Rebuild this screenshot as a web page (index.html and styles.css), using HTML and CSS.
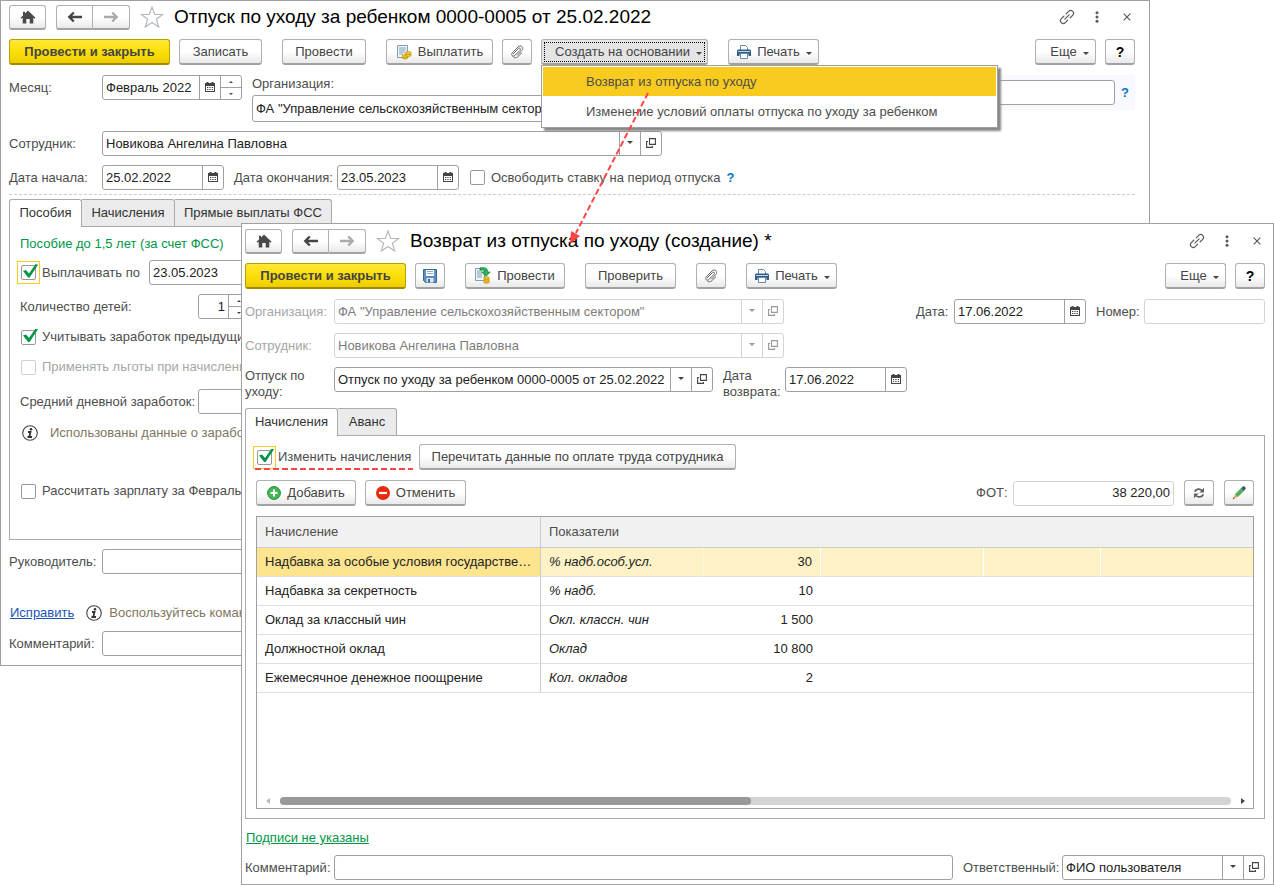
FILE: index.html
```html
<!DOCTYPE html>
<html lang="ru">
<head>
<meta charset="utf-8">
<title>Возврат из отпуска по уходу</title>
<link rel="stylesheet" href="styles.css">
</head>
<body>
<svg class="sprite" aria-hidden="true">
  <symbol id="home" viewBox="0 0 16 14"><path fill="#4a4a4a" d="M8 .6 15.500 7.800 14.500 8.800 13.300 7.800V13.500H9.700V9H6.300v4.500H2.700V7.800L1.500 8.800.5 7.800 3 5.400V1.800h2v1.700z"/></symbol>
  <symbol id="back" viewBox="0 0 16 12"><path fill="none" stroke="currentColor" stroke-width="2.400" d="M2 6h13M6.800 1.500 2.300 6l4.500 4.500"/></symbol>
  <symbol id="fwd" viewBox="0 0 16 12"><path fill="none" stroke="currentColor" stroke-width="2.400" d="M14 6H1M9.200 1.500 13.700 6l-4.500 4.500"/></symbol>
  <symbol id="star" viewBox="0 0 24 22"><path fill="#fff" stroke="#b4b9c0" stroke-width="1.200" d="m12 1 2.700 7.500h8l-6.300 4.800 2.300 7.700L12 16.500 5.300 21l2.300-7.700L1.300 8.500h8z"/></symbol>
  <symbol id="link" viewBox="0 0 16 16"><path transform="rotate(-45 8 8)" fill="none" stroke="#5a5a5a" stroke-width="1.200" stroke-linecap="round" d="M6.300 5.200H2.800a2.800 2.800 0 0 0 0 5.600h3.500M9.700 5.200h3.500a2.800 2.800 0 0 1 0 5.600H9.700M5 8h6"/></symbol>
  <symbol id="dots" viewBox="0 0 4 12"><circle cx="2" cy="1.700" r="1.500" fill="#5a5a5a"/><circle cx="2" cy="6" r="1.500" fill="#5a5a5a"/><circle cx="2" cy="10.300" r="1.500" fill="#5a5a5a"/></symbol>
  <symbol id="close" viewBox="0 0 8 8"><path stroke="#555" stroke-width="1.100" d="m.7.7 6.600 6.600m0-6.600L.7 7.300"/></symbol>
  <symbol id="caret" viewBox="0 0 6 3"><path fill="currentColor" d="M0 0h6L3 3z"/></symbol>
  <symbol id="caret-up" viewBox="0 0 4 2"><path fill="currentColor" d="M0 2h4L2 0z"/></symbol>
  <symbol id="open" viewBox="0 0 10 10"><path fill="none" stroke="currentColor" stroke-width="1.100" d="M3.500.6h5.900v5.800H3.500zM2 3.500H.6v5.900h5.800V8"/></symbol>
  <symbol id="cal" viewBox="0 0 10 10"><path fill="currentColor" fill-rule="evenodd" d="M0 1h1.500V0h2v1h3V0h2v1H10v9H0zM1 4v5h8V4z"/><path fill="currentColor" d="M2 5h1.300v1H2zm2.300 0h1.300v1H4.300zm2.400 0H8v1H6.700zM2 7h1.300v1H2zm2.300 0h1.300v1H4.300zm2.400 0H8v1H6.700z"/></symbol>
  <symbol id="clip" viewBox="0 0 14 14"><path fill="none" stroke="#666" stroke-linecap="round" d="m3.300 8.700 5-5c1.500-1.400 3 .2 1.700 1.600l-4.900 5c-2.300 2.100-4.700-.3-2.600-2.600L8 2c3-2.800 6.500.6 3.700 3.600L7.500 10"/><path fill="none" stroke="#666" d="m3 11.500c1.500 2 3.500 1.500 5 0L12 7.600"/></symbol>
  <symbol id="printer" viewBox="0 0 14 14"><path fill="#fff" stroke="#6b88a5" d="M3.500 5V.5h5l2 2V5"/><path fill="#2f5f8c" d="M0 5.500 1 4.500h12l1 1V11h-2.500V9h-9v2H0z"/><path fill="#fff" stroke="#6b88a5" d="M3.500 8.500h7v5h-7z"/><path fill="#bcd3e6" d="M1 6h12v1H1z"/></symbol>
  <symbol id="pay" viewBox="0 0 16 16"><path fill="#f2f7fb" stroke="#7f9db9" d="M1.500 1.500h10v12h-10z"/><path stroke="#7f9db9" d="M3 4h7M3 6h7M3 8h6M3 10h4"/><g fill="#f3c431" stroke="#b8860b" stroke-width=".6"><ellipse cx="9" cy="13.500" rx="3" ry="1.500"/><ellipse cx="9" cy="12" rx="3" ry="1.500"/><ellipse cx="12.300" cy="11" rx="3" ry="1.500"/><ellipse cx="12.300" cy="9" rx="3" ry="1.500"/></g></symbol>
  <symbol id="post" viewBox="0 0 16 17"><path fill="#f2f7fb" stroke="#7f9db9" d="M.5 1.500h9v12h-9z"/><path stroke="#7f9db9" d="M2 4h5M2 6h5M2 8h5M2 10h5"/><path fill="#27b558" stroke="#12803a" stroke-width=".7" d="M5 .7h3.500c3 0 4.200 1.500 4.200 4.300h2.600L11 9.300 6.700 5h2.600c0-1.700-.8-2-2.300-2H5z"/><g fill="#f3c431" stroke="#b8860b" stroke-width=".6"><ellipse cx="11.500" cy="15" rx="3" ry="1.300"/><ellipse cx="11.500" cy="13" rx="3" ry="1.300"/><ellipse cx="11.500" cy="11" rx="3" ry="1.300"/></g></symbol>
  <symbol id="save" viewBox="0 0 14 14"><path fill="#5d8fc4" stroke="#3b6797" d="M.5.5h13v13h-11l-2-2z"/><path fill="#fff" d="M3 1h8v6H3z"/><path stroke="#8fa9c4" d="M4 2.500h6M4 4.500h6"/><path fill="#dfe7ef" d="M3.500 9h7v4.500h-7z"/><path fill="#3b6797" d="M5 10h2v3.500H5z"/></symbol>
  <symbol id="add" viewBox="0 0 14 14"><circle cx="7" cy="7" r="6.400" fill="#43b852" stroke="#1f8a3a"/><path stroke="#fff" stroke-width="2" d="M7 3.500v7M3.500 7h7"/></symbol>
  <symbol id="stop" viewBox="0 0 14 14"><circle cx="7" cy="7" r="7" fill="#ea2a0c"/><path stroke="#fff" stroke-width="2.200" d="M3 7h8"/></symbol>
  <symbol id="refresh" viewBox="0 0 12 12"><path fill="none" stroke="#606060" stroke-width="1.800" d="M1.700 4.700C3 1.500 7 1.300 9 3.500M10.300 7.300C9 10.500 5 10.700 3 8.500"/><path fill="#606060" d="M11 .8v4.700H6.300zM1 11.200V6.500h4.700z"/></symbol>
  <symbol id="pencil" viewBox="0 0 14 14"><path fill="#4bb557" stroke="#2c7f3b" stroke-width=".5" d="m3.300 8.200 6.500-6.500 2.500 2.500-6.500 6.500z"/><path fill="#44546a" d="m9.300 2.200 1.700-1.700c.6-.5 1-.5 1.500 0l1 1c.5.5.5 1 0 1.500l-1.700 1.700z"/><path fill="#e9a84c" d="m3.300 8.200 2.500 2.500L.7 13.300z"/><path fill="#333" d="m1.600 11.500-.9 1.800 1.800-.9z"/></symbol>
  <symbol id="info" viewBox="0 0 16 16"><circle cx="8" cy="8" r="7.300" fill="#fff" stroke="#444" stroke-width="1.100"/><circle cx="9" cy="4.200" r="1.300" fill="#333"/><path fill="none" stroke="#333" stroke-width="1.800" d="M6 7h2.500l-1.200 5H10M5.500 12H8"/></symbol>
</svg>

<main class="desktop">
  <section class="window window-back">
    <header class="titlebar">
      <button class="btn home" aria-label="Начало"><svg width="16" height="14"><use href="#home"/></svg></button>
      <div class="nav"><button class="btn" aria-label="Назад"><svg width="16" height="12"><use href="#back"/></svg></button><button class="btn dim" aria-label="Вперед"><svg width="16" height="12"><use href="#fwd"/></svg></button></div>
      <svg class="star" width="24" height="22"><use href="#star"/></svg>
      <h1>Отпуск по уходу за ребенком 0000-0005 от 25.02.2022</h1>
      <div class="wintools"><button aria-label="Ссылка"><svg width="16" height="16"><use href="#link"/></svg></button><button aria-label="Меню"><svg width="4" height="12"><use href="#dots"/></svg></button><button aria-label="Закрыть"><svg width="8" height="8"><use href="#close"/></svg></button></div>
    </header>
    <div class="toolbar">
      <div class="group"><button class="btn primary">Провести и закрыть</button><button class="btn w83">Записать</button></div>
      <button class="btn w84">Провести</button>
      <div class="group">
        <button class="btn w107"><svg width="16" height="16"><use href="#pay"/></svg>Выплатить</button>
        <button class="btn square" aria-label="Файлы"><svg width="14" height="14"><use href="#clip"/></svg></button>
        <div class="menu-host">
          <button class="btn pressed" aria-expanded="true">Создать на основании<svg class="caret" width="6" height="3"><use href="#caret"/></svg></button>
          <div class="menu"><button class="current">Возврат из отпуска по уходу</button><button>Изменение условий оплаты отпуска по уходу за ребенком</button></div>
        </div>
      </div>
      <button class="btn w91"><svg width="14" height="14"><use href="#printer"/></svg>Печать<svg class="caret" width="6" height="3"><use href="#caret"/></svg></button>
      <div class="group push"><button class="btn more">Еще<svg class="caret" width="6" height="3"><use href="#caret"/></svg></button><button class="btn square help">?</button></div>
    </div>

    <div class="row top">
      <label class="lab93" for="month">Месяц:</label>
      <div class="field w140"><input id="month" value="Февраль 2022"><button aria-label="Календарь"><svg width="10" height="10"><use href="#cal"/></svg></button><span class="spin"><button aria-label="Больше"><svg width="4" height="2"><use href="#caret-up"/></svg></button><button aria-label="Меньше"><svg width="4" height="2"><use href="#caret"/></svg></button></span></div>
      <div class="org"><label for="org1">Организация:</label><div class="field tall"><input id="org1" value='ФА "Управление сельскохозяйственным сектором"'></div></div>
      <div class="number-box"><div class="field"><input aria-label="Номер"></div><a class="q" href="#">?</a></div>
    </div>
    <div class="row">
      <label class="lab93" for="emp1">Сотрудник:</label>
      <div class="field w560"><input id="emp1" value="Новикова Ангелина Павловна"><button aria-label="Выбрать"><svg width="6" height="3"><use href="#caret"/></svg></button><button aria-label="Открыть"><svg width="10" height="10"><use href="#open"/></svg></button></div>
    </div>
    <div class="row dates">
      <label class="lab93" for="start">Дата начала:</label>
      <div class="field w122"><input id="start" value="25.02.2022"><button aria-label="Календарь"><svg width="10" height="10"><use href="#cal"/></svg></button></div>
      <label class="lab103" for="end">Дата окончания:</label>
      <div class="field w122"><input id="end" value="23.05.2023"><button aria-label="Календарь"><svg width="10" height="10"><use href="#cal"/></svg></button></div>
      <label class="check after-field"><input type="checkbox">Освободить ставку на период отпуска</label>
      <a class="q" href="#">?</a>
    </div>
    <div class="tabs"><button class="active w73">Пособия</button><button class="w93">Начисления</button><button class="w157">Прямые выплаты ФСС</button></div>
    <div class="panel benefits">
      <p class="green">Пособие до 1,5 лет (за счет ФСС)</p>
      <div class="row"><label class="check lab129"><span class="focus"><input type="checkbox" checked></span>Выплачивать по</label><div class="field w122"><input aria-label="Выплачивать по" value="23.05.2023"></div></div>
      <div class="row"><label class="lab178" for="kids">Количество детей:</label><div class="field w52"><input id="kids" class="num" value="1"><span class="spin"><button aria-label="Больше"><svg width="4" height="2"><use href="#caret-up"/></svg></button><button aria-label="Меньше"><svg width="4" height="2"><use href="#caret"/></svg></button></span></div></div>
      <label class="check line"><input type="checkbox" checked>Учитывать заработок предыдущих</label>
      <label class="check line off"><input type="checkbox" disabled>Применять льготы при начислении</label>
      <div class="row avg"><label class="lab178" for="avg">Средний дневной заработок:</label><div class="field w122"><input id="avg"></div></div>
      <p class="note"><svg width="16" height="16"><use href="#info"/></svg>Использованы данные о заработке</p>
      <label class="check calc"><input type="checkbox">Рассчитать зарплату за Февраль</label>
    </div>
    <div class="row boss"><label class="lab93" for="boss">Руководитель:</label><div class="field w560"><input id="boss"></div></div>
    <p class="fix"><a href="#">Исправить</a><svg width="16" height="16"><use href="#info"/></svg><span>Воспользуйтесь командой</span></p>
    <div class="row"><label class="lab93" for="com1">Комментарий:</label><div class="field w560"><input id="com1"></div></div>
  </section>

  <section class="window window-front">
    <header class="titlebar">
      <button class="btn home" aria-label="Начало"><svg width="16" height="14"><use href="#home"/></svg></button>
      <div class="nav"><button class="btn" aria-label="Назад"><svg width="16" height="12"><use href="#back"/></svg></button><button class="btn dim" aria-label="Вперед"><svg width="16" height="12"><use href="#fwd"/></svg></button></div>
      <svg class="star" width="24" height="22"><use href="#star"/></svg>
      <h1>Возврат из отпуска по уходу (создание) *</h1>
      <div class="wintools"><button aria-label="Ссылка"><svg width="16" height="16"><use href="#link"/></svg></button><button aria-label="Меню"><svg width="4" height="12"><use href="#dots"/></svg></button><button aria-label="Закрыть"><svg width="8" height="8"><use href="#close"/></svg></button></div>
    </header>
    <div class="toolbar">
      <div class="group"><button class="btn primary">Провести и закрыть</button><button class="btn square" aria-label="Записать"><svg width="14" height="14"><use href="#save"/></svg></button></div>
      <button class="btn w100"><svg width="16" height="17"><use href="#post"/></svg>Провести</button>
      <button class="btn w91">Проверить</button>
      <button class="btn square" aria-label="Файлы"><svg width="14" height="14"><use href="#clip"/></svg></button>
      <button class="btn w91"><svg width="14" height="14"><use href="#printer"/></svg>Печать<svg class="caret" width="6" height="3"><use href="#caret"/></svg></button>
      <div class="group push"><button class="btn more">Еще<svg class="caret" width="6" height="3"><use href="#caret"/></svg></button><button class="btn square help">?</button></div>
    </div>
    <div class="row">
      <label class="lab89 off" for="org2">Организация:</label>
      <div class="field off w450"><input id="org2" disabled value='ФА "Управление сельскохозяйственным сектором"'><button disabled aria-label="Выбрать"><svg width="6" height="3"><use href="#caret"/></svg></button><button disabled aria-label="Открыть"><svg width="10" height="10"><use href="#open"/></svg></button></div>
      <label class="lab38 push" for="date">Дата:</label>
      <div class="field w132"><input id="date" value="17.06.2022"><button aria-label="Календарь"><svg width="10" height="10"><use href="#cal"/></svg></button></div>
      <label class="lab48" for="num">Номер:</label>
      <div class="field off w121"><input id="num" disabled></div>
    </div>
    <div class="row">
      <label class="lab89 off" for="emp2">Сотрудник:</label>
      <div class="field off w450"><input id="emp2" disabled value="Новикова Ангелина Павловна"><button disabled aria-label="Выбрать"><svg width="6" height="3"><use href="#caret"/></svg></button><button disabled aria-label="Открыть"><svg width="10" height="10"><use href="#open"/></svg></button></div>
    </div>
    <div class="row top">
      <label class="lab89 two" for="leave">Отпуск по уходу:</label>
      <div class="field w379"><input id="leave" value="Отпуск по уходу за ребенком 0000-0005 от 25.02.2022"><button aria-label="Выбрать"><svg width="6" height="3"><use href="#caret"/></svg></button><button aria-label="Открыть"><svg width="10" height="10"><use href="#open"/></svg></button></div>
      <label class="lab62 two" for="ret">Дата возврата:</label>
      <div class="field w122"><input id="ret" value="17.06.2022"><button aria-label="Календарь"><svg width="10" height="10"><use href="#cal"/></svg></button></div>
    </div>
    <div class="tabs"><button class="active w93">Начисления</button><button class="w60">Аванс</button></div>
    <div class="panel accruals">
      <div class="row change"><label class="check marked"><span class="focus"><input type="checkbox" checked></span>Изменить начисления</label><button class="btn">Перечитать данные по оплате труда сотрудника</button></div>
      <div class="row actions">
        <button class="btn w100"><svg width="14" height="14"><use href="#add"/></svg>Добавить</button><button class="btn w101"><svg width="14" height="14"><use href="#stop"/></svg>Отменить</button>
        <label class="lab38 push" for="fot">ФОТ:</label><div class="field off fot"><input id="fot" class="num" readonly value="38 220,00"></div>
        <button class="btn square" aria-label="Обновить"><svg width="12" height="12"><use href="#refresh"/></svg></button><button class="btn square pen" aria-label="Изменить"><svg width="14" height="14"><use href="#pencil"/></svg></button>
      </div>
      <div class="grid-box">
        <table>
          <colgroup><col class="c1"><col class="c2"><col class="c3"><col class="c2"><col class="c3"><col></colgroup>
          <thead><tr><th>Начисление</th><th colspan="5">Показатели</th></tr></thead>
          <tbody>
            <tr class="selected"><td>Надбавка за особые условия государстве…</td><td>% надб.особ.усл.</td><td>30</td><td></td><td></td><td></td></tr>
            <tr><td>Надбавка за секретность</td><td>% надб.</td><td>10</td><td></td><td></td><td></td></tr>
            <tr><td>Оклад за классный чин</td><td>Окл. классн. чин</td><td>1 500</td><td></td><td></td><td></td></tr>
            <tr><td>Должностной оклад</td><td>Оклад</td><td>10 800</td><td></td><td></td><td></td></tr>
            <tr><td>Ежемесячное денежное поощрение</td><td>Кол. окладов</td><td>2</td><td></td><td></td><td></td></tr>
          </tbody>
        </table>
        <div class="scroll"><svg width="4" height="6"><path fill="#bbb" d="M4 0v6L0 3z"/></svg><div class="track"><div class="thumb"></div></div><svg width="4" height="6"><path fill="#444" d="M0 0v6l4-3z"/></svg></div>
      </div>
    </div>
    <a class="sign" href="#">Подписи не указаны</a>
    <div class="row">
      <label class="lab89" for="com2">Комментарий:</label><div class="field grow"><input id="com2"></div>
      <label class="lab99" for="resp">Ответственный:</label>
      <div class="field w203"><input id="resp" value="ФИО пользователя"><button aria-label="Выбрать"><svg width="6" height="3"><use href="#caret"/></svg></button><button aria-label="Открыть"><svg width="10" height="10"><use href="#open"/></svg></button></div>
    </div>
  </section>
  <svg class="pointer" width="90" height="160" aria-hidden="true"><path fill="none" stroke="#f44" stroke-width="2" stroke-dasharray="6 3" d="M84 3 12 143"/><path fill="#f44" d="m6 154 1-13 9 5z"/></svg>
</main>
</body>
</html>
```

FILE: styles.css
```css
* { box-sizing: border-box; }
body { margin: 0; background: #fff; color: #4d4d4d; font: 13px/16px "Liberation Sans", Arial, sans-serif; }
button, input { font: inherit; color: inherit; margin: 0; padding: 0; }
button { background: none; border: 0; }
svg { flex: none; display: block; }
p { margin: 0; }
.sprite { position: absolute; width: 0; height: 0; }
.desktop { position: relative; min-height: 100vh; overflow: hidden; }

.window { position: absolute; background: #fff; border: 1px solid #a0a0a0; }
.window-back { left: 0; top: 0; right: 124px; padding: 4px 14px 9px 8px; }
.window-front { left: 241px; top: 223px; right: 0; bottom: 0; padding: 5px 8px 4px 3px; display: flex; flex-direction: column; }

.titlebar { display: flex; align-items: center; height: 24px; margin-bottom: 10px; }
.titlebar h1 { margin: 0; font-size: 19px; line-height: 24px; font-weight: 400; color: #000; white-space: nowrap; }
.star { margin: 0 10px; }
.btn { display: flex; align-items: center; justify-content: center; gap: 6px; height: 26px; border: 1px solid #b0b0b0; border-bottom: 2px solid #a2a2a2; border-radius: 3px; background: linear-gradient(#fff 50%, #e9e9e9); color: #444; white-space: nowrap; }
.btn .caret { margin: 3px -2px 0 0; }
.home { width: 37px; height: 25px; margin-right: 10px; }
.nav { display: flex; }
.nav .btn { width: 37px; height: 25px; border-radius: 3px 0 0 3px; }
.nav .btn + .btn { border-left: 0; border-radius: 0 3px 3px 0; }
.nav .dim { color: #aaa; }
.wintools { display: flex; margin-left: auto; margin-right: -7px; }
.wintools button { width: 30px; height: 24px; display: flex; align-items: center; justify-content: center; }

.toolbar { display: flex; gap: 20px; margin-bottom: 10px; }
.group { display: flex; gap: 9px; }
.push { margin-left: auto; }
.primary { width: 161px; font-weight: 700; border-color: #b9a000; border-bottom-color: #a18b00; background: linear-gradient(#ffe838, #fbdc00 60%, #eccd00); }
.square { width: 30px; }
.more { width: 61px; padding-left: 6px; }
.help { font-size: 14px; font-weight: 700; color: #000; }
.menu-host { position: relative; }
.pressed { width: 167px; background: #e4e4e4; outline: 1px dotted #000; outline-offset: -4px; padding-left: 6px; }
.menu { position: absolute; z-index: 2; left: 0; top: 26px; width: 457px; padding: 1px; border: 1px solid #a0a0a0; background: #fff; box-shadow: 3px 3px 2px #888; }
.menu button { display: block; width: 100%; height: 29px; padding-left: 43px; text-align: left; white-space: nowrap; }
.menu button + button { margin-top: 1px; }
.menu .current { background: #facb1f; }

.row { display: flex; align-items: center; margin-bottom: 9px; }
.row.top { align-items: flex-start; }
.row.top > label { line-height: 25px; }
.row.top > .two { line-height: 16px; }
.row label { flex: none; white-space: nowrap; }
.row .two { white-space: normal; padding: 1px 24px 0 0; margin-bottom: -1px; }
.row .lab62.two { padding-right: 0; }
.field { flex: none; display: flex; height: 25px; border: 1px solid #a0a0a0; border-radius: 3px; background: #fff; color: #222; overflow: hidden; }
.field input { flex: 1; min-width: 0; border: 0; background: none; padding: 0 3px; outline: 0; }
.field > button, .spin { flex: none; width: 21px; border-left: 1px solid #a0a0a0; display: flex; align-items: center; justify-content: center; color: #444; }
.field > button { padding-bottom: 2px; }
.spin { flex-direction: column; }
.spin button { flex: 1; width: 100%; display: flex; align-items: center; justify-content: center; }
.spin button + button { border-top: 1px solid #a0a0a0; }
.num { text-align: right; }
.off { color: #a6a6a6; }
.field.off { border-color: #d4d4d4; color: #7d7d7d; }
.field.off > button { border-color: #d4d4d4; color: #999; }
.grow { flex: 1; margin-right: 10px; }

.org { margin-left: 10px; width: 410px; }
.org label { display: block; height: 20px; line-height: 18px; }
.tall { height: 27px; }
.number-box { margin-left: auto; width: 430px; height: 35px; padding: 0 6px 0 10px; background: #f8f9ff; display: flex; align-items: center; gap: 6px; }
.number-box .field { flex: 1; }
.q { color: #0b74c4; font-weight: 700; text-decoration: none; }

.check { display: flex; align-items: center; gap: 6px; white-space: nowrap; }
.check input { appearance: none; flex: none; width: 15px; height: 15px; border: 1px solid #999; border-radius: 2px; background: #fff; position: relative; }
.check input:checked::after { content: ""; position: absolute; left: 1px; top: -2px; width: 15px; height: 14px; background: #009646; clip-path: polygon(0 50%, 20% 42%, 40% 68%, 84% 0, 100% 6%, 44% 96%, 34% 96%); }
.check input:disabled { border-color: #d0d0d0; }
.focus { flex: none; display: flex; padding: 3px; margin: 0 -4px; border: 1px solid #facb1f; }
.after-field { margin: 0 6px 0 11px; }

.dates { margin-bottom: 0; padding-bottom: 4px; border-bottom: 1px dashed #ccc; }
.tabs { display: flex; margin-top: 4px; position: relative; }
.tabs button { height: 27px; border: 1px solid #aaa; border-left: 0; border-bottom: 0; background: #ebebeb; color: #333; border-radius: 0 3px 0 0; white-space: nowrap; }
.tabs button.active { height: 28px; margin-bottom: -1px; padding-bottom: 1px; background: #fff; border-left: 1px solid #aaa; border-radius: 3px 3px 0 0; }
.panel { border: 1px solid #aaa; }
.benefits { height: 314px; padding: 8px 10px; margin-bottom: 9px; }
.green { color: #009646; line-height: 18px; margin-bottom: 7px; }
.benefits .check { padding-left: 1px; }
.benefits .line { height: 30px; color: #4d4d4d; }
.benefits .line.off { color: #a6a6a6; }
.benefits .row + .line { margin-top: -6px; }
.avg { margin: 7px 0; }
.note, .fix { display: flex; align-items: center; color: #80765f; white-space: nowrap; }
.note { gap: 12px; padding-left: 2px; line-height: 24px; }
.calc { margin-top: 38px; }
.fix { height: 18px; margin: 30px 0 9px; padding-left: 1px; gap: 7px; }
.fix a { color: #1a52b8; margin-right: 5px; }
.window-back > .row:last-child { margin-bottom: 0; }

.window-front .tabs { margin-top: 0; }
.accruals { flex: 1; display: flex; flex-direction: column; padding: 8px 10px 9px; }
.change { margin-bottom: 10px; gap: 7px; }
.marked { position: relative; width: 156px; padding-left: 1px; }
.marked::after { content: ""; position: absolute; left: -1px; right: -1px; bottom: -1px; height: 2px; background: repeating-linear-gradient(90deg, #f44 0 6px, transparent 6px 9px); }
.change .btn { width: 317px; }
.actions { gap: 9px; margin-bottom: 10px; }
.actions .push { margin-right: -10px; }
.field.fot { width: 161px; margin-right: 1px; color: #222; }
.pen { margin-left: 1px; }
.grid-box { flex: 1; display: flex; flex-direction: column; border: 1px solid #a0a0a0; }
table { width: 100%; table-layout: fixed; border-collapse: separate; border-spacing: 0; color: #222; }
.c1 { width: 284px; }
.c2 { width: 163px; }
.c3 { width: 117px; }
th { height: 31px; padding: 0 8px; text-align: left; font-weight: 400; color: #4d4d4d; background: #f1f1f1; border-bottom: 1px solid #ccc; border-right: 1px solid #ccc; }
th:last-child { border-right: 0; }
td { height: 29px; padding: 0 8px; border-bottom: 1px solid #e0e0e0; white-space: nowrap; }
td:first-child { border-right: 1px solid #ccc; }
td:nth-child(2) { font-style: italic; }
td:nth-child(3) { text-align: right; }
.selected td { background: #fdf2c6; border-right: 1px solid #fff; }
.selected td:first-child { background: #fde48e; border-right-color: #ccc; }
.selected td:nth-child(2), .selected td:last-child { border-right-color: #fdf2c6; }
.selected td:nth-child(2) { border-right-color: #fff6d8; }
.scroll { margin-top: auto; display: flex; align-items: center; gap: 10px; padding: 0 8px 3px 9px; }
.track { flex: 1; height: 8px; border-radius: 4px; background: #d4d4d4; }
.thumb { width: 49.500%; height: 8px; border-radius: 4px; background: #999; }
.sign { align-self: flex-start; margin: 11px 0 9px 1px; line-height: 16px; color: #009646; }
.window-front > .row:last-child { margin-bottom: 0; }
.pointer { position: absolute; z-index: 5; left: 564px; top: 90px; pointer-events: none; }

.lab38 { width: 38px; } .lab48 { width: 58px; padding-left: 10px; } .lab62 { margin-left: 10px; }
.row .lab62 { width: 62px; }
.lab89 { width: 89px; } .lab93 { width: 93px; } .lab99 { width: 99px; } .lab103 { width: 113px; padding-left: 10px; }
.lab129 { width: 129px; } .lab178 { width: 178px; }
.w52 { width: 52px; } .w60 { width: 59px; } .w73 { width: 73px; } .w83 { width: 83px; } .w84 { width: 84px; } .w91 { width: 91px; } .w93 { width: 93px; }
.w100 { width: 100px; } .w101 { width: 101px; } .w107 { width: 107px; } .w121 { width: 121px; } .w122 { width: 122px; } .w132 { width: 132px; }
.w140 { width: 140px; } .w157 { width: 157px; } .w203 { width: 203px; } .w379 { width: 379px; } .w450 { width: 450px; } .w560 { width: 560px; }
```
